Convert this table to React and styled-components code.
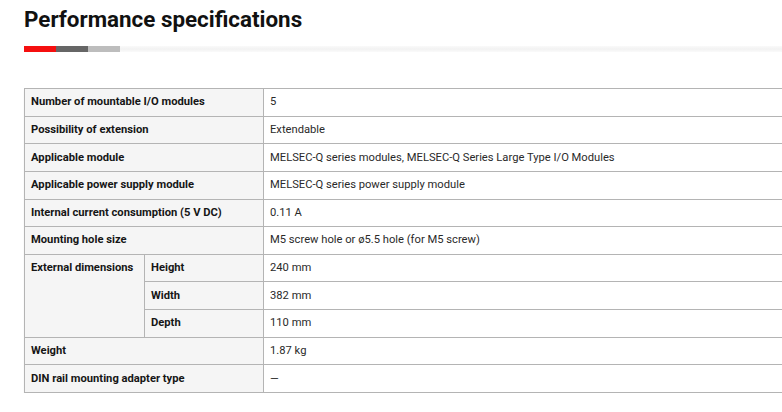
import styled, { createGlobalStyle } from 'styled-components';

const GlobalStyle = createGlobalStyle`
  html, body {
    margin: 0;
    padding: 0;
    background: #fff;
    overflow: hidden;
  }
  body {
    font-family: Roboto, "Liberation Sans", Arial, sans-serif;
    color: #1a1a1a;
  }
`;

const Section = styled.section`
  padding: 4px 0 0 24px;
`;

const Title = styled.h2`
  margin: 0;
  font-size: 22.4px;
  line-height: 30px;
  font-weight: 700;
  color: #111;
`;

const Underline = styled.div`
  display: flex;
  height: 6px;
  margin-top: 12px;
  background: linear-gradient(to bottom, #fafafa, #f2f2f2 50%, #fafafa);
`;

const Segment = styled.span`
  width: 32px;
  background: ${p => p.color};
`;

const Table = styled.table`
  margin-top: 36px;
  width: 100%;
  border-collapse: collapse;
  font-size: 11.2px;
  box-shadow: 0 2px 2px rgba(0, 0, 0, 0.05);
`;

const Cell = styled.td`
  height: 26.64px;
  padding: 0 6px;
  border: 1px solid #b4b4b4;
  border-right: ${p => (p.head ? '1px solid #b4b4b4' : 'none')};
  vertical-align: ${p => (p.top ? 'top' : 'middle')};
  line-height: ${p => (p.top ? '26px' : '14px')};
  background: ${p => (p.head ? '#f5f5f5' : '#fff')};
  font-weight: ${p => (p.head ? 700 : 400)};
  color: ${p => (p.head ? '#161616' : '#2a2a2a')};
  white-space: nowrap;
`;

const rows = [
  ['Number of mountable I/O modules', '5'],
  ['Possibility of extension', 'Extendable'],
  ['Applicable module', 'MELSEC-Q series modules, MELSEC-Q Series Large Type I/O Modules'],
  ['Applicable power supply module', 'MELSEC-Q series power supply module'],
  ['Internal current consumption (5 V DC)', '0.11 A'],
  ['Mounting hole size', 'M5 screw hole or ø5.5 hole (for M5 screw)'],
];

const dims = [
  ['Height', '240 mm'],
  ['Width', '382 mm'],
  ['Depth', '110 mm'],
];

const tail = [
  ['Weight', '1.87 kg'],
  ['DIN rail mounting adapter type', '—'],
];

export default function App() {
  return (
    <Section>
      <GlobalStyle />
      <Title>Performance specifications</Title>
      <Underline>
        <Segment color="#f50f0f" />
        <Segment color="#666666" />
        <Segment color="#bdbdbd" />
      </Underline>
      <Table>
        <colgroup>
          <col style={{ width: 120 }} />
          <col style={{ width: 119 }} />
          <col />
        </colgroup>
        <tbody>
          {rows.map(([k, v]) => (
            <tr key={k}>
              <Cell head colSpan={2}>{k}</Cell>
              <Cell>{v}</Cell>
            </tr>
          ))}
          {dims.map(([k, v], i) => (
            <tr key={k}>
              {i === 0 && (
                <Cell head top rowSpan={3}>External dimensions</Cell>
              )}
              <Cell head>{k}</Cell>
              <Cell>{v}</Cell>
            </tr>
          ))}
          {tail.map(([k, v]) => (
            <tr key={k}>
              <Cell head colSpan={2}>{k}</Cell>
              <Cell>{v}</Cell>
            </tr>
          ))}
        </tbody>
      </Table>
    </Section>
  );
}
